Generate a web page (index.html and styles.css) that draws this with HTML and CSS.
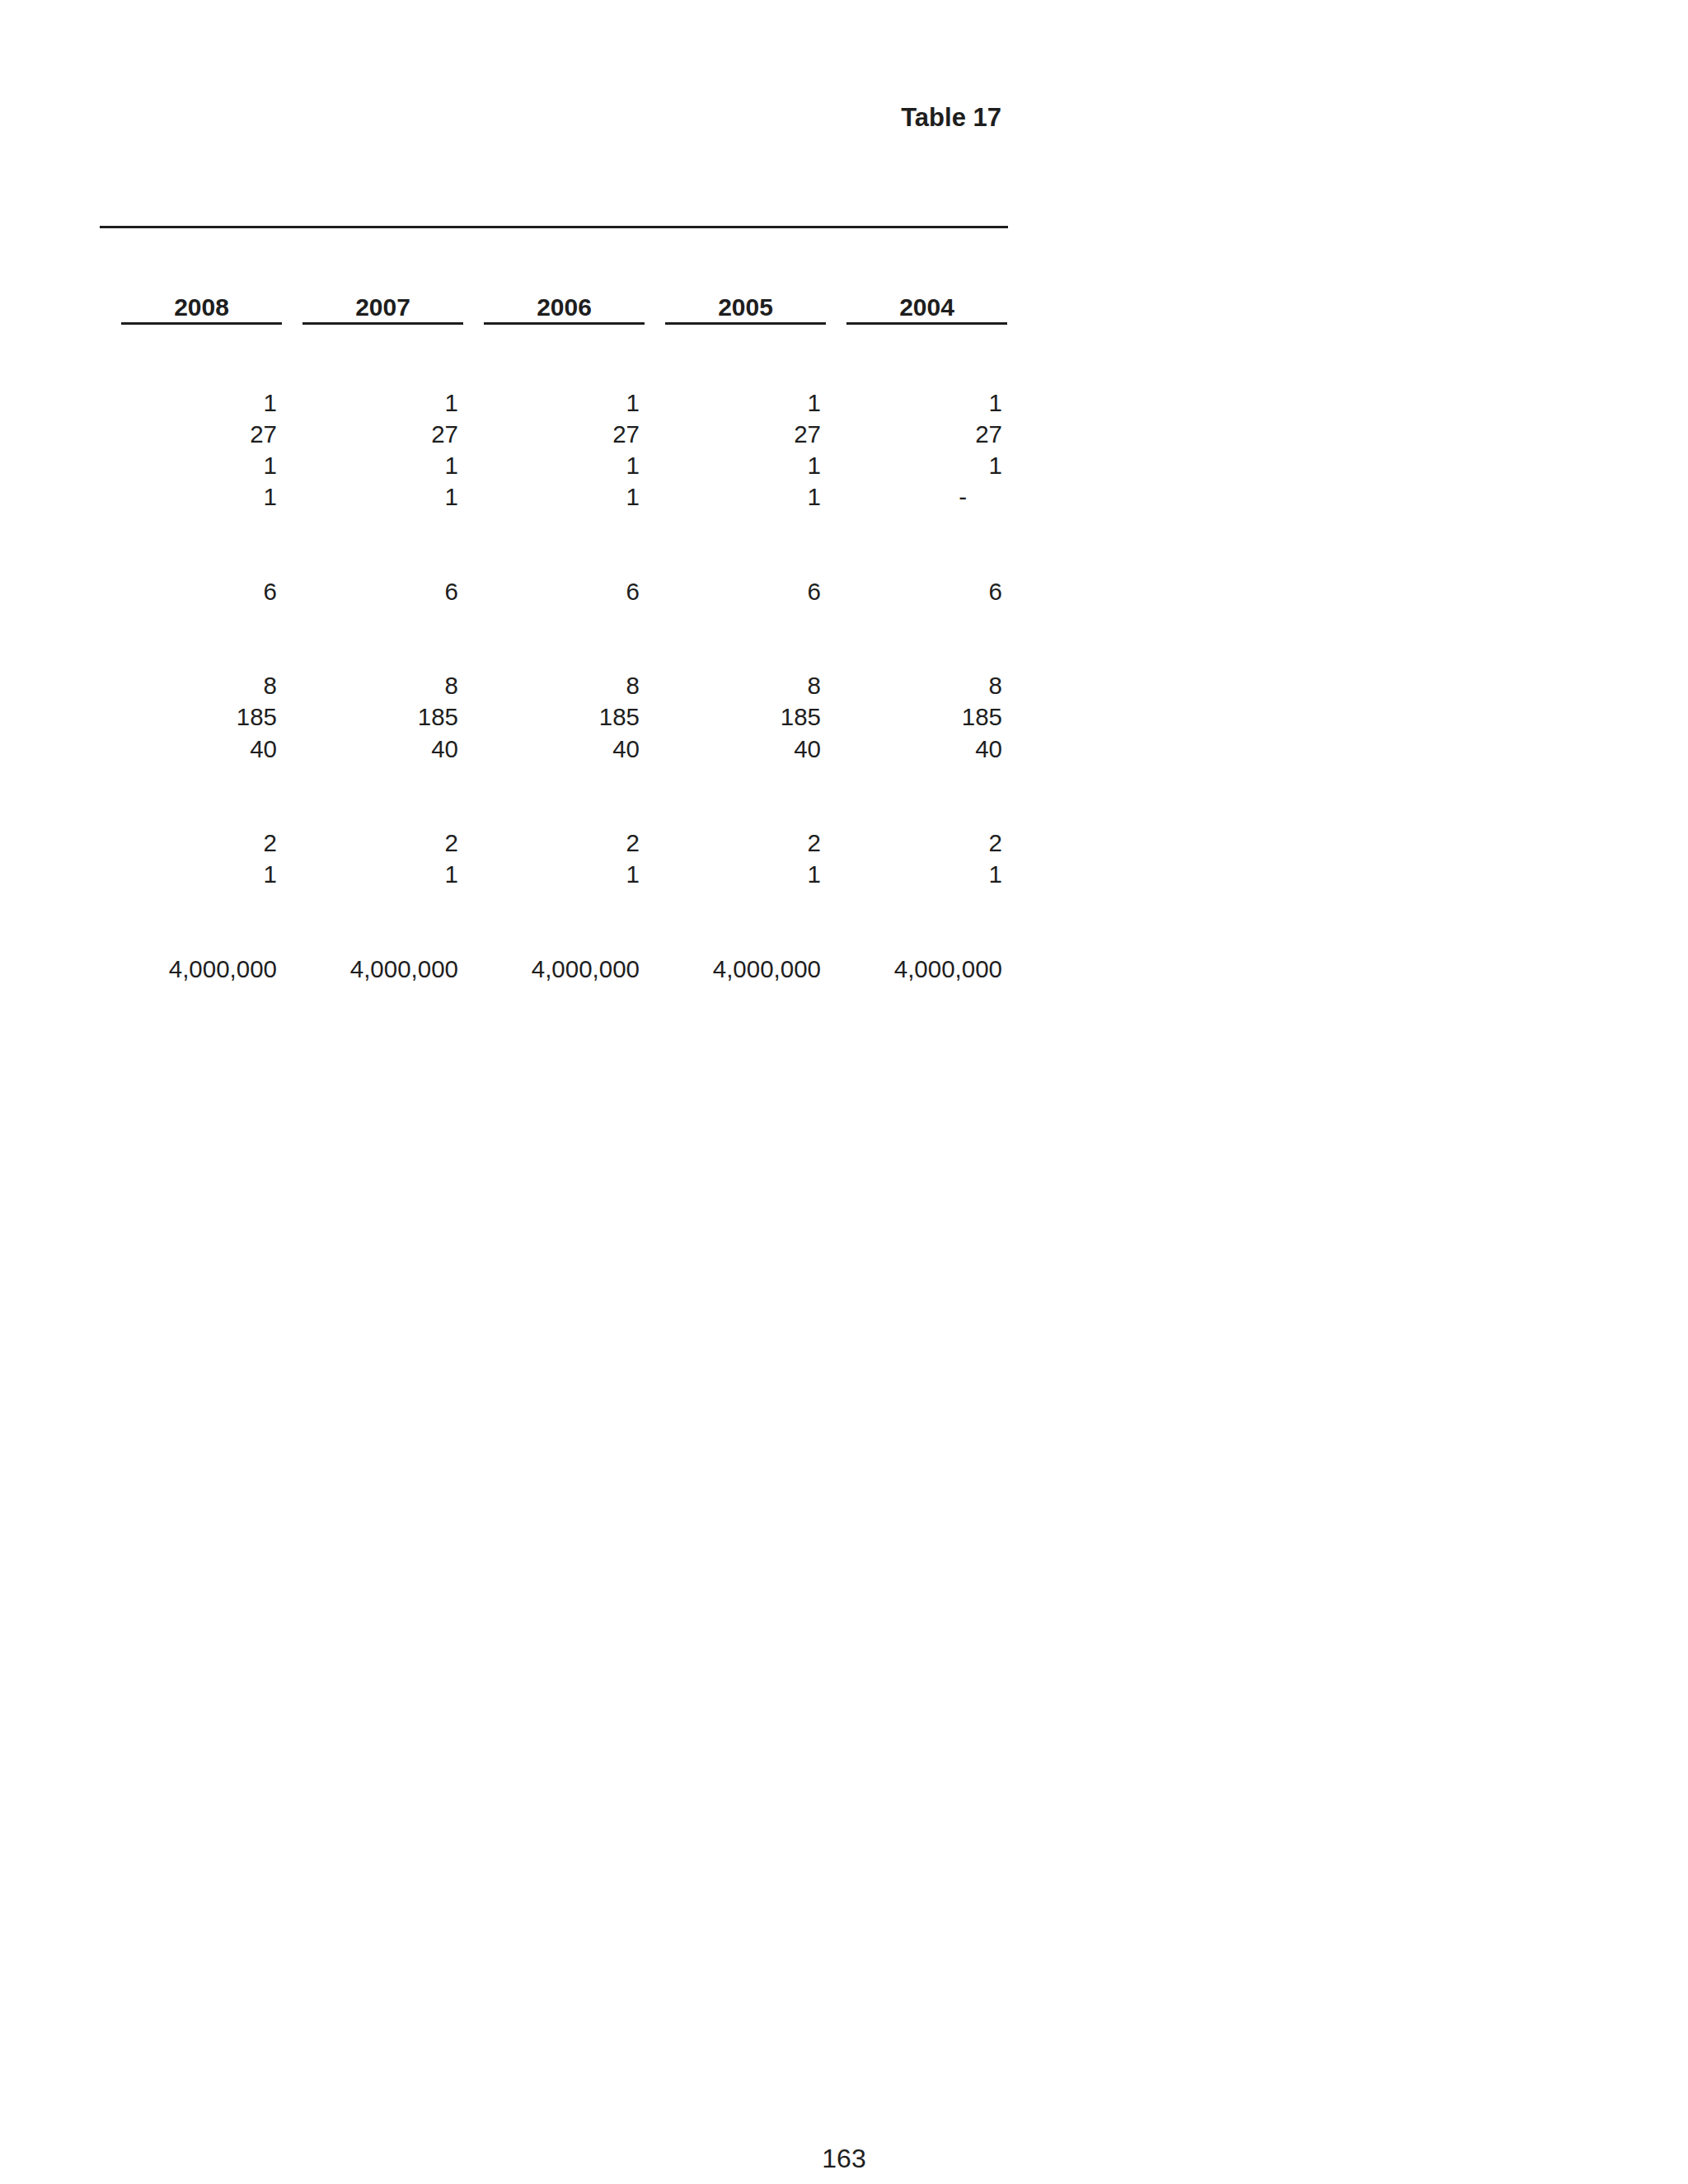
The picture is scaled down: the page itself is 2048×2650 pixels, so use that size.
FILE: index.html
```html
<!DOCTYPE html>
<html lang="en">
<head>
<meta charset="utf-8">
<title>Table 17</title>
<link rel="stylesheet" href="styles.css">
</head>
<body>
<div class="sheet">
  <div class="title">Table 17</div>
  <div class="rule"></div>
  <div class="row head">
    <div class="year">2008</div>
    <div class="year">2007</div>
    <div class="year">2006</div>
    <div class="year">2005</div>
    <div class="year">2004</div>
  </div>
  <div class="body">
    <div class="row"><div>1</div><div>1</div><div>1</div><div>1</div><div>1</div></div>
    <div class="row"><div>27</div><div>27</div><div>27</div><div>27</div><div>27</div></div>
    <div class="row"><div>1</div><div>1</div><div>1</div><div>1</div><div>1</div></div>
    <div class="row"><div>1</div><div>1</div><div>1</div><div>1</div><div class="dash">-</div></div>
    <div class="row blank"></div>
    <div class="row blank"></div>
    <div class="row"><div>6</div><div>6</div><div>6</div><div>6</div><div>6</div></div>
    <div class="row blank"></div>
    <div class="row blank"></div>
    <div class="row"><div>8</div><div>8</div><div>8</div><div>8</div><div>8</div></div>
    <div class="row"><div>185</div><div>185</div><div>185</div><div>185</div><div>185</div></div>
    <div class="row"><div>40</div><div>40</div><div>40</div><div>40</div><div>40</div></div>
    <div class="row blank"></div>
    <div class="row blank"></div>
    <div class="row"><div>2</div><div>2</div><div>2</div><div>2</div><div>2</div></div>
    <div class="row"><div>1</div><div>1</div><div>1</div><div>1</div><div>1</div></div>
    <div class="row blank"></div>
    <div class="row blank"></div>
    <div class="row"><div>4,000,000</div><div>4,000,000</div><div>4,000,000</div><div>4,000,000</div><div>4,000,000</div></div>
  </div>
</div>
<div class="page-number">163</div>
</body>
</html>
```

FILE: styles.css
```css
html, body {
  margin: 0;
  padding: 0;
  background: #ffffff;
}

body {
  font-family: "Liberation Sans", Arial, sans-serif;
  color: #1e1e1e;
  width: 2048px;
}

.sheet {
  margin-left: 121px;
  width: 1102px;
  padding-top: 125px;
}

.title {
  font-size: 31px;
  font-weight: bold;
  line-height: 36px;
  text-align: right;
  padding-right: 8px;
}

.rule {
  height: 3px;
  background: #1e1e1e;
  margin-top: 113px;
}

.row {
  display: grid;
  grid-template-columns: repeat(5, 195px);
  column-gap: 25px;
  margin-left: 26px;
}

.head {
  margin-top: 80.6px;
}

.year {
  font-size: 30px;
  font-weight: bold;
  line-height: 30px;
  text-align: center;
  padding-bottom: 3.4px;
  border-bottom: 3px solid #1e1e1e;
}

.body {
  margin-top: 75.6px;
  font-size: 29.5px;
}

.body .row {
  height: 38.2px;
  line-height: 38.2px;
}

.body .row > div {
  text-align: right;
  padding-right: 6px;
}

.body .row > div.dash {
  padding-right: 49px;
}

.page-number {
  margin-top: 1405px;
  font-size: 32px;
  line-height: 38px;
  text-align: center;
}
```
